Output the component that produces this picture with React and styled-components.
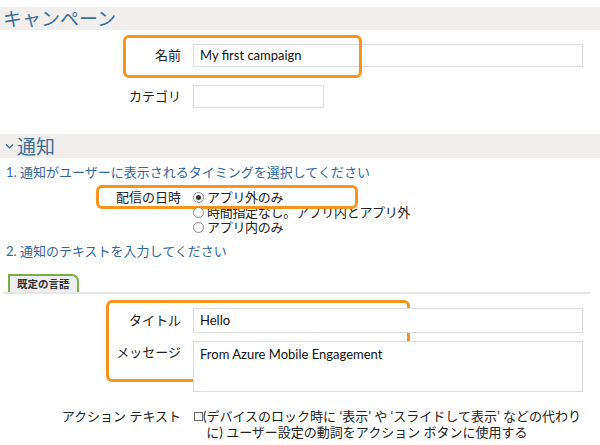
import React from 'react';
import styled, { createGlobalStyle } from 'styled-components';

const GlobalStyle = createGlobalStyle`
    body {
        margin: 0;
        background: #fff;
        font-family: "Lato", "Noto Sans CJK JP", sans-serif;
        color: #222;
    }
`;

const Page = styled.div`
    width: 600px;
    height: 445px;
    overflow: hidden;
    padding-top: 7px;
    box-sizing: border-box;
`;

const SectionHeader = styled.div`
    display: flex;
    align-items: center;
    gap: 3px;
    height: ${props => props.h || 23}px;
    margin-top: ${props => props.mt || 0}px;
    padding-left: ${props => props.pl || 3}px;
    background: #f0efee;
    color: #3d6c95;
    font-size: 19px;
    line-height: 1;
`;

const Step = styled.div`
    margin-top: ${props => props.mt || 0}px;
    padding-left: 6px;
    font-size: 13px;
    line-height: 18px;
    color: #32689a;
`;

const FieldRow = styled.div`
    position: relative;
    display: grid;
    grid-template-columns: 181px minmax(0, 1fr);
    column-gap: 12px;
    align-items: start;
    padding-right: 17px;
    margin-top: ${props => props.mt || 0}px;
`;

const Label = styled.div`
    text-align: right;
    font-size: 13px;
    line-height: ${props => props.lh || 23}px;
    white-space: nowrap;
`;

const TextBox = styled.div`
    box-sizing: border-box;
    width: ${props => (props.w ? `${props.w}px` : '100%')};
    height: ${props => props.h || 23}px;
    border: 1px solid #dddddd;
    background: #fff;
    padding: ${props => (props.multi ? '3px 6px' : '0 6px')};
    font-size: 13px;
    line-height: ${props => (props.multi ? '18px' : `${(props.h || 23) - 2}px`)};
    color: #111;
`;

const Highlight = styled.div`
    position: absolute;
    box-sizing: border-box;
    border: 3px solid #f7941e;
    border-radius: 6px;
    pointer-events: none;
`;

const Group = styled.div`
    position: relative;
    margin-top: ${props => props.mt || 0}px;
`;

const RadioList = styled.div`
    display: flex;
    flex-direction: column;
`;

const RadioLine = styled.div`
    display: flex;
    align-items: center;
    gap: 3px;
    font-size: 13px;
    line-height: 15px;
    letter-spacing: -0.3px;
    white-space: nowrap;
`;

const RadioDot = styled.span`
    position: relative;
    width: 11px;
    height: 11px;
    box-sizing: border-box;
    border: 1px solid #8a8a8a;
    border-radius: 50%;
    background: #fff;
    flex: none;

    &::after {
        content: '';
        display: ${props => (props.on ? 'block' : 'none')};
        position: absolute;
        left: 2px;
        top: 2px;
        width: 5px;
        height: 5px;
        border-radius: 50%;
        background: #333;
    }
`;

const TabBar = styled.div`
    display: flex;
    margin: ${props => props.mt || 0}px 10px 0 3px;
    padding-left: 5px;
    border-bottom: 2px solid #e6e6e6;
`;

const Tab = styled.div`
    height: 18px;
    box-sizing: border-box;
    padding: 0 7px;
    border: 2px solid #78ae45;
    border-bottom: none;
    border-top-right-radius: 7px;
    background: #eeeeee;
    font-size: 10.5px;
    font-weight: bold;
    line-height: 17px;
    color: #333;
`;

const CheckWrap = styled.div`
    display: flex;
    align-items: flex-start;
    font-size: 13px;
    line-height: 16px;
`;

const CheckBox = styled.span`
    width: 9px;
    height: 9px;
    margin: 4px 0 0 1px;
    box-sizing: border-box;
    border: 1px solid #666;
    background: #fff;
    flex: none;
`;

const CheckText = styled.div`
    white-space: nowrap;
`;

const Chevron = () => (
    <svg width="9" height="7" viewBox="0 0 9 7">
        <path d="M1 1.5 L4.5 5 L8 1.5" fill="none" stroke="#3d6c95" strokeWidth="1.2" />
    </svg>
);

const radios = [
    { text: 'アプリ外のみ', on: true },
    { text: '時間指定なし。アプリ内とアプリ外', on: false },
    { text: 'アプリ内のみ', on: false },
];

export default function App() {
    return (
        <Page>
            <GlobalStyle />
            <SectionHeader>キャンペーン</SectionHeader>

            <FieldRow mt={14}>
                <Highlight style={{ left: 123, top: -9, width: 239, height: 43 }} />
                <Label>名前</Label>
                <TextBox>My first campaign</TextBox>
            </FieldRow>
            <FieldRow mt={18}>
                <Label>カテゴリ</Label>
                <TextBox w={131} />
            </FieldRow>

            <SectionHeader mt={26} h={24} pl={5}>
                <Chevron />
                通知
            </SectionHeader>

            <Step mt={5}>1. 通知がユーザーに表示されるタイミングを選択してください</Step>

            <FieldRow mt={9}>
                <Highlight style={{ left: 96, top: -5, width: 262, height: 24 }} />
                <Label lh={15}>配信の日時</Label>
                <RadioList>
                    {radios.map(r => (
                        <RadioLine key={r.text}>
                            <RadioDot on={r.on} />
                            {r.text}
                        </RadioLine>
                    ))}
                </RadioList>
            </FieldRow>

            <Step mt={7}>2. 通知のテキストを入力してください</Step>

            <TabBar mt={14}>
                <Tab>既定の言語</Tab>
            </TabBar>

            <Group mt={14}>
                <Highlight style={{ left: 106, top: -8, width: 304, height: 82 }} />
                <FieldRow>
                    <Label lh={25}>タイトル</Label>
                    <TextBox h={25}>Hello</TextBox>
                </FieldRow>
                <FieldRow mt={8}>
                    <Label lh={22}>メッセージ</Label>
                    <TextBox h={51} multi>From Azure Mobile Engagement</TextBox>
                </FieldRow>
            </Group>

            <FieldRow mt={16}>
                <Label lh={16}>アクション テキスト</Label>
                <CheckWrap>
                    <CheckBox />
                    <CheckText>
                        (デバイスのロック時に ‘表示’ や ‘スライドして表示’ などの代わり<br />
                        &nbsp;に) ユーザー設定の動詞をアクション ボタンに使用する
                    </CheckText>
                </CheckWrap>
            </FieldRow>
        </Page>
    );
}
